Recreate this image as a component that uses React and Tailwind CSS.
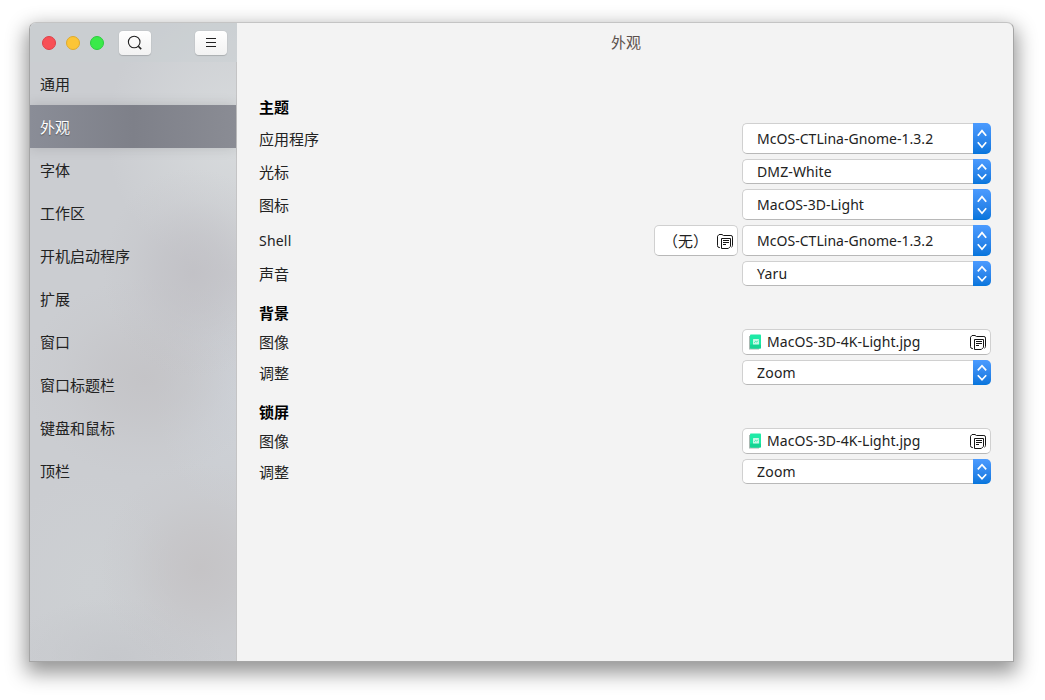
import React from "react";

const NAV = ["通用", "外观", "字体", "工作区", "开机启动程序", "扩展", "窗口", "窗口标题栏", "键盘和鼠标", "顶栏"];

function Chevrons({ tall }) {
  return (
    <svg width="18" height="21" viewBox="0 0 18 21" fill="none" stroke="white" strokeWidth="1.7" className="shrink-0">
      <path d={tall ? "M4.8 7.8 9 2.6l4.2 5.2M4.8 14.2 9 19.2l4.2-5" : "M4.8 8.4 9 3.8l4.2 4.6M4.8 13.2 9 17.8l4.2-4.6"} />
    </svg>
  );
}

function FolderIcon() {
  return (
    <svg width="16" height="16" viewBox="0 0 16 16" fill="none" stroke="#161616" strokeWidth="1" className="shrink-0">
      <path d="M3 14.5H2.2Q.5 14.5.5 12.6V3.2L2 1.5H5l1.5 1h7.4q1.6 0 1.6 1.6v8.3q0 1.3-1 1.8" />
      <path d="M4.5 5.5h9v7.8l-2.2 2.2H4.5z" />
      <path d="M6 7.5h6M6 9.5h6M6 11.5h3" />
    </svg>
  );
}

function JpgIcon() {
  return (
    <svg width="12" height="16" viewBox="0 0 12 16" className="shrink-0">
      <path d="M0 2h2v12h8v1.5H0z" fill="#a9b8b2" />
      <rect x="1" y=".5" width="11" height="14" rx=".8" fill="#1eeaa6" />
      <rect x="1" y="10.5" width="11" height="4" rx=".8" fill="#15d493" />
      <rect x="4" y="5" width="6" height="5.5" rx=".6" fill="#c8f8e6" />
      <path d="m5.2 8.8 1.4-1.5 1 .8L9 6.6" stroke="#1edfa0" strokeWidth=".8" fill="none" />
    </svg>
  );
}

const BOX = "flex items-center rounded-[5px] border border-[#d0d0d0] border-b-[#b8b8b8] bg-white";

function Select({ value, tall, spacing }) {
  return (
    <div className={`flex w-[249px] ${tall ? "h-[31px]" : "h-[25px]"}`}>
      <div className="flex flex-1 items-center rounded-l-[5px] border border-r-0 border-[#d0d0d0] border-b-[#b8b8b8] bg-white pl-[14px]">
        <span className={`whitespace-nowrap ${spacing}`}>{value}</span>
      </div>
      <div className="flex w-[18px] items-center justify-center rounded-r-[5px] bg-linear-to-b from-[#4b9bff] to-[#0475dc]">
        <Chevrons tall={tall} />
      </div>
    </div>
  );
}

function ImageField() {
  return (
    <div className={`${BOX} h-[26px] w-[249px] pr-[4px] pl-[6px]`}>
      <JpgIcon />
      <span className="ml-[6px] flex-1 whitespace-nowrap tracking-[0.06px]">MacOS-3D-4K-Light.jpg</span>
      <FolderIcon />
    </div>
  );
}

function Row({ label, labelClass = "text-[15px]", children }) {
  return (
    <div className="flex items-center justify-between">
      <span className={`leading-[20px] text-[#222] ${labelClass}`}>{label}</span>
      <div className="flex gap-[4px]">{children}</div>
    </div>
  );
}

function Section({ title, children }) {
  return (
    <section className="flex flex-col gap-[5px]">
      <h2 className="h-[21px] text-[15px] leading-[21px] font-bold text-black">{title}</h2>
      {children}
    </section>
  );
}

export default function App() {
  return (
    <div className="h-[700px] w-[1045px] overflow-hidden bg-white pt-[22px] pl-[29px] font-['Noto_Sans','Noto_Sans_CJK_SC',sans-serif] text-[14px] leading-[20px] text-[#222]">
      <div className="flex h-[640px] w-[985px] overflow-hidden rounded-t-[7px] border border-[#a5a5a5] border-t-[#c4c4c4] bg-[#f3f3f3] shadow-[0_8px_20px_3px_rgba(0,0,0,0.42)]">
        <aside className="flex w-[207px] shrink-0 flex-col overflow-hidden bg-[#cbcdd1] bg-[radial-gradient(ellipse_90px_105px_at_163px_250px,#bfbec3c0_0%,#bfbec380_35%,#bfbec328_70%,transparent_100%),radial-gradient(ellipse_120px_100px_at_115px_355px,#c2c1c4c0_0%,#c2c1c480_35%,#c2c1c428_70%,transparent_100%),radial-gradient(ellipse_100px_105px_at_170px_545px,#c4c2c4e0_0%,#c4c2c490_35%,#c4c2c428_70%,transparent_100%),radial-gradient(ellipse_130px_140px_at_206px_110px,#d8dbdd_0%,#d8dbdd80_50%,transparent_100%),radial-gradient(ellipse_80px_120px_at_206px_370px,#ced2d8_0%,#ced2d880_50%,transparent_100%),radial-gradient(ellipse_110px_60px_at_85px_635px,#c6c8cc_0%,transparent_100%),radial-gradient(ellipse_90px_110px_at_60px_560px,#cdd0d3_0%,transparent_100%)]">
          <header className="flex h-[39px] shrink-0 items-center bg-[#c9d0d2]/40 pr-[10px] pl-[12px]">
            <div className="flex gap-[10px]">
              <i className="size-[14px] rounded-full border border-[#df4048] bg-[#f85056]" />
              <i className="size-[14px] rounded-full border border-[#dfaa2c] bg-[#fcc536]" />
              <i className="size-[14px] rounded-full border border-[#2bcd3e] bg-[#3aea49]" />
            </div>
            <button className="ml-[15px] flex h-[24px] w-[32px] items-center justify-center rounded-[4px] bg-linear-to-b from-white to-[#f2f2f2] shadow-[0_0_1px_rgba(0,0,0,0.2),0_1px_1px_rgba(0,0,0,0.15)]">
              <svg width="16" height="16" viewBox="0 0 16 16" fill="none" stroke="#222">
                <circle cx="7.2" cy="7" r="5.8" strokeWidth="1.1" />
                <path d="m11.3 11.2 2.9 2.9" strokeWidth="1.6" />
              </svg>
            </button>
            <button className="ml-auto flex h-[24px] w-[32px] items-center justify-center rounded-[4px] bg-linear-to-b from-white to-[#f2f2f2] shadow-[0_0_1px_rgba(0,0,0,0.2),0_1px_1px_rgba(0,0,0,0.15)]">
              <svg width="10" height="10" viewBox="0 0 10 10" stroke="#222" strokeWidth="1">
                <path d="M0 .5h10M0 4.5h10M0 8.5h10" />
              </svg>
            </button>
          </header>
          <nav className="flex flex-1 flex-col border-r border-[#c4c4c5]">
            {NAV.map((name, i) => (
              <div
                key={name}
                className={
                  i === 1
                    ? "flex h-[43px] items-center bg-linear-to-r from-[#8a8d97] via-[#7e8089] to-[#8a8c94] pt-[1px] pl-[10px] text-[15px] text-white shadow-[0_0_12px_rgba(0,0,0,0.13)] [text-shadow:0_1px_1px_rgba(0,0,0,0.4)]"
                    : "flex h-[43px] items-center pt-[1px] pl-[10px] text-[15px] text-[#222]"
                }
              >
                {name}
              </div>
            ))}
          </nav>
        </aside>
        <main className="flex flex-1 flex-col">
          <header className="flex h-[39px] items-center justify-center pb-[2px] pl-[2px] text-[15px] text-[#5c504c]">外观</header>
          <div className="flex flex-col gap-[17px] pt-[35px] pr-[22px] pl-[22px]">
            <Section title="主题">
              <Row label="应用程序"><Select tall value="McOS-CTLina-Gnome-1.3.2" spacing="tracking-[0.03px]" /></Row>
              <Row label="光标"><Select value="DMZ-White" spacing="tracking-[0.12px]" /></Row>
              <Row label="图标"><Select tall value="MacOS-3D-Light" spacing="tracking-[0.04px]" /></Row>
              <Row label="Shell" labelClass="text-[14px] tracking-[0.2px]">
                <div className={`${BOX} h-[31px] w-[84px] justify-between pr-[4px] pl-[8px]`}>
                  <span className="text-[15px]">（无）</span>
                  <FolderIcon />
                </div>
                <Select tall value="McOS-CTLina-Gnome-1.3.2" spacing="tracking-[0.03px]" />
              </Row>
              <Row label="声音"><Select value="Yaru" spacing="tracking-[0.2px]" /></Row>
            </Section>
            <Section title="背景">
              <Row label="图像"><ImageField /></Row>
              <Row label="调整"><Select value="Zoom" spacing="tracking-[0.2px]" /></Row>
            </Section>
            <Section title="锁屏">
              <Row label="图像"><ImageField /></Row>
              <Row label="调整"><Select value="Zoom" spacing="tracking-[0.2px]" /></Row>
            </Section>
          </div>
        </main>
      </div>
    </div>
  );
}
